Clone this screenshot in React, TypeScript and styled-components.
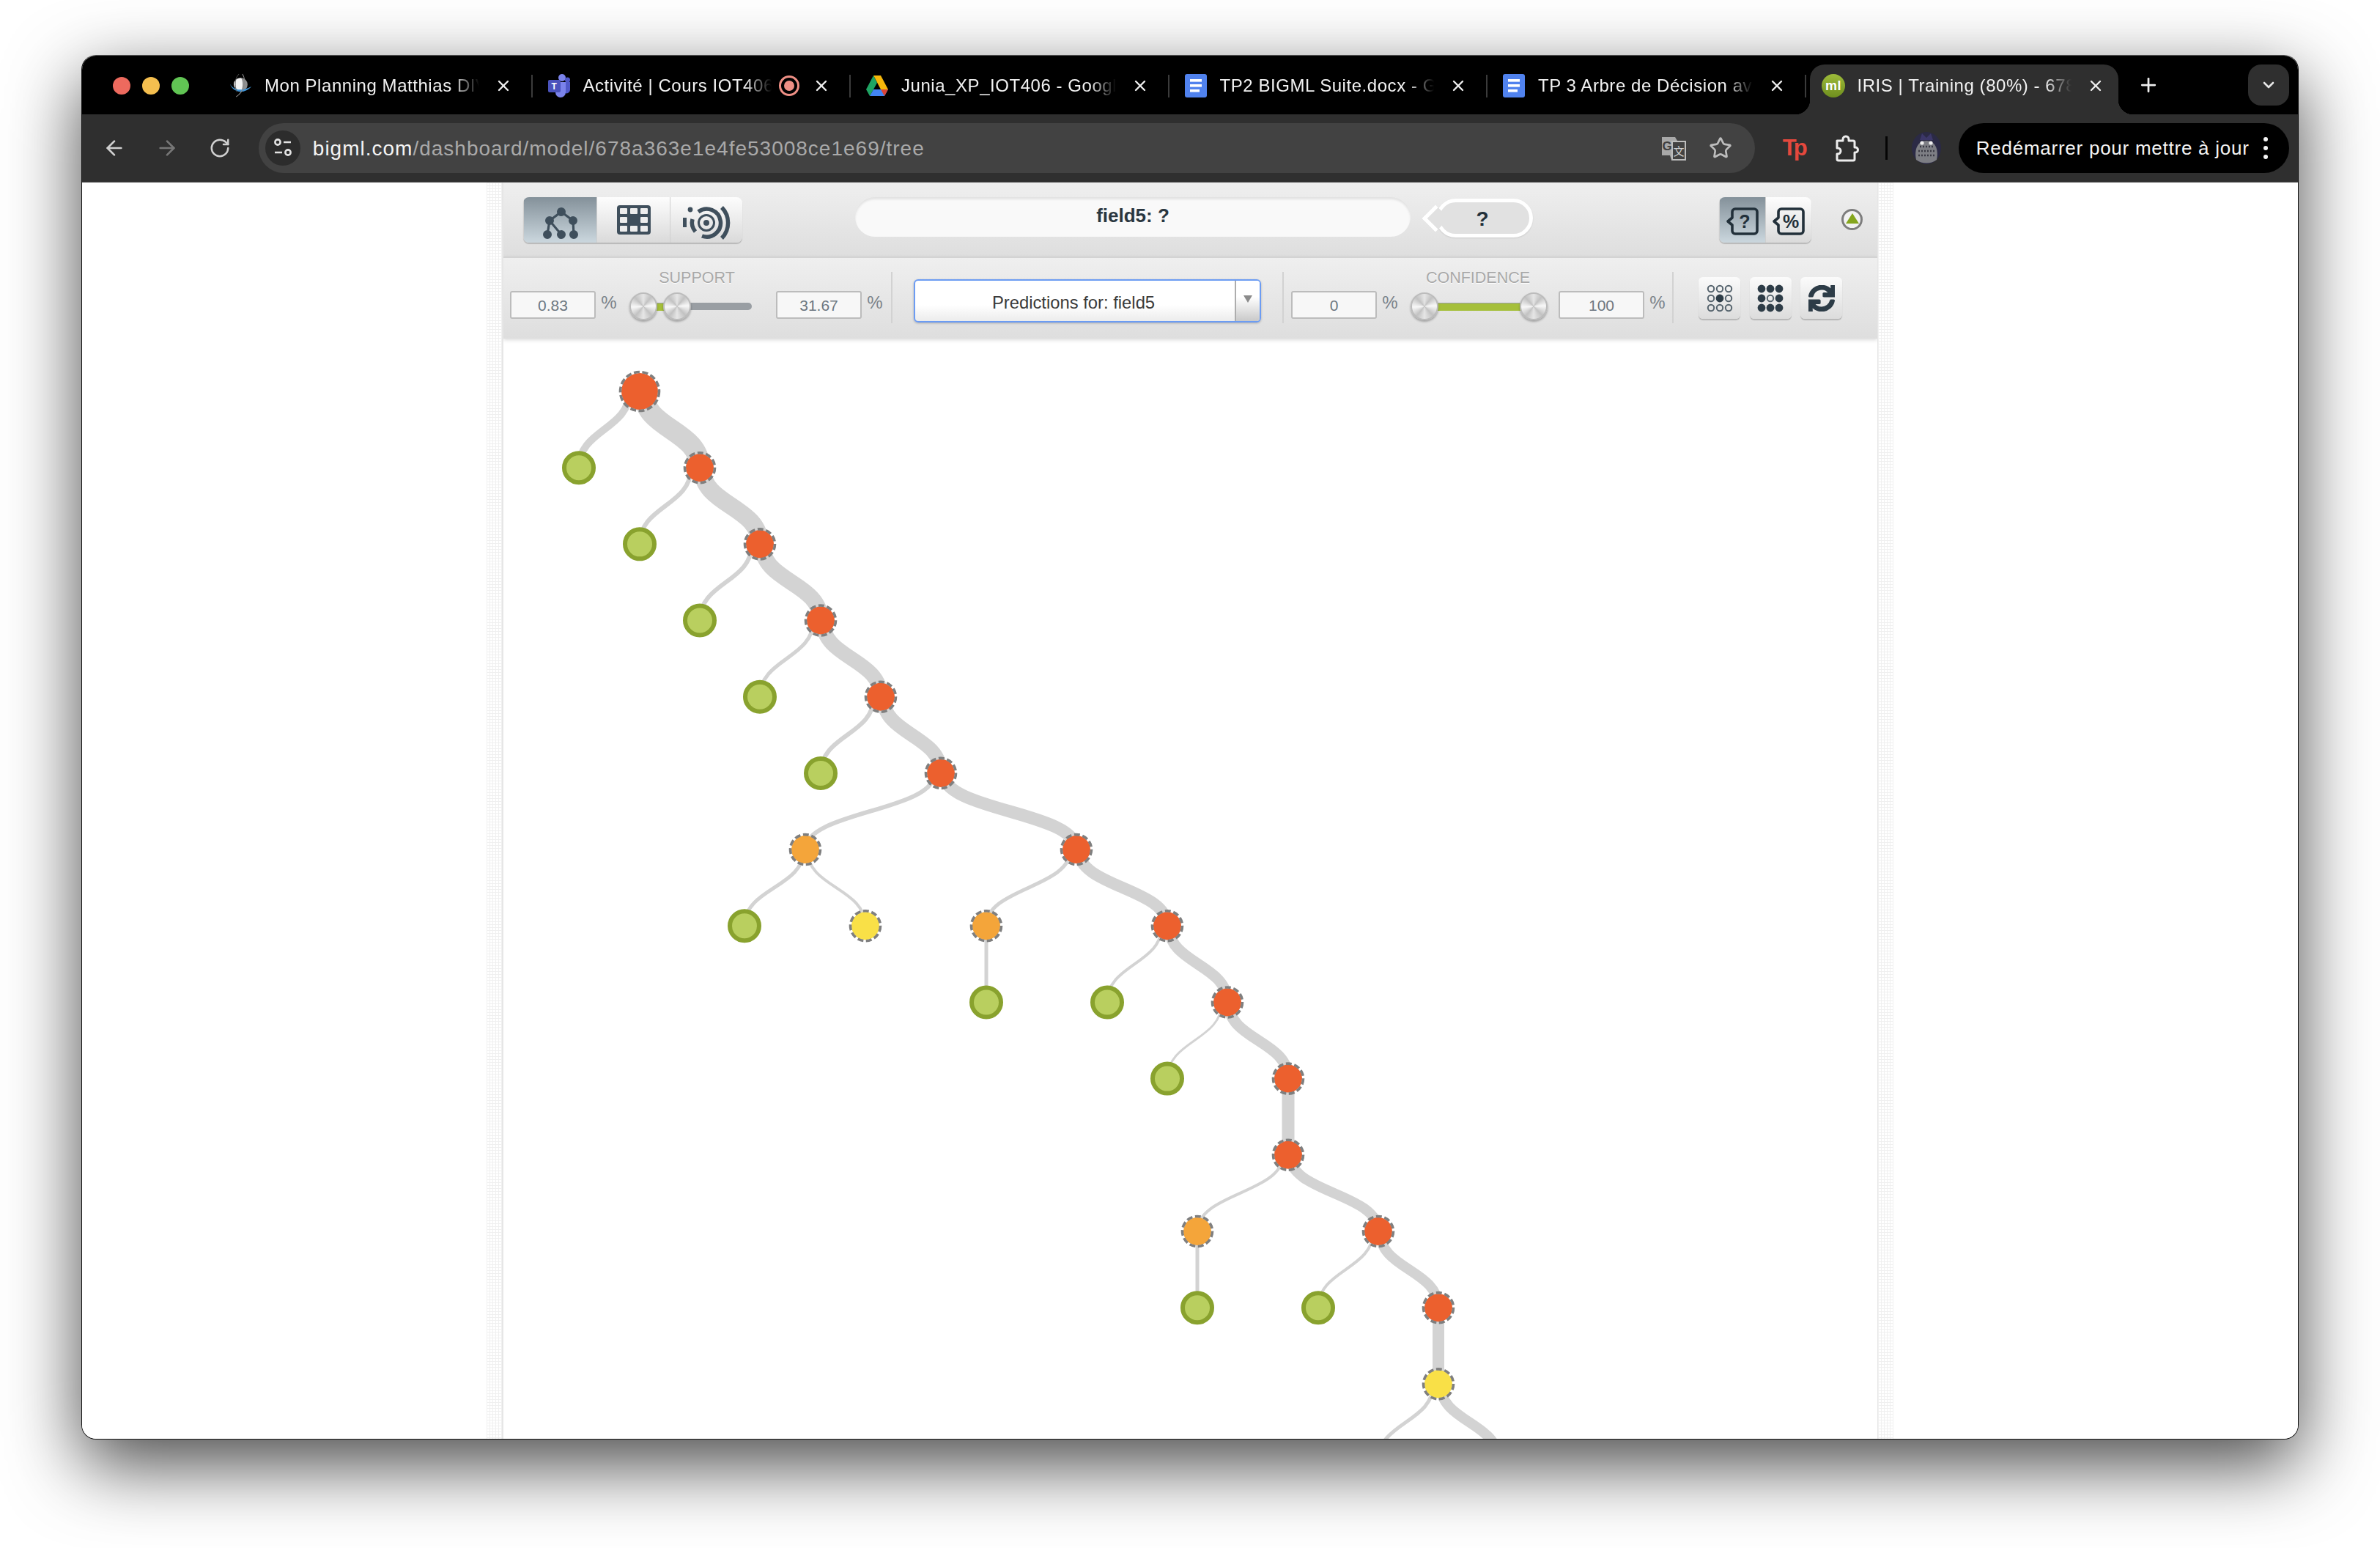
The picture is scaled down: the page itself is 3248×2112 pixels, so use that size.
import React from 'react';
import styled, { createGlobalStyle } from 'styled-components';
import { ArrowLeft, ArrowRight, ChevronDown, Plus, RotateCw, Star, X } from 'lucide-react';
import { FaSync } from 'react-icons/fa';

const GlobalStyle = createGlobalStyle`
  html, body {
    margin: 0;
    background: #fff;
    font-family: 'Liberation Sans', Arial, sans-serif;
  }
`;

const Page = styled.div`
  width: 3248px;
  height: 2112px;
  padding: 75px 0 0 111px;
  box-sizing: border-box;
  overflow: hidden;
`;

const Window = styled.div`
  width: 3026px;
  height: 1889px;
  box-sizing: border-box;
  display: flex;
  flex-direction: column;
  border: 1px solid #111;
  border-top-color: #555;
  border-radius: 20px;
  overflow: hidden;
  background: #fff;
  box-shadow: 0 34px 100px rgba(0, 0, 0, 0.72);
`;

const TitleBar = styled.div`
  height: 80px;
  flex: none;
  display: flex;
  align-items: flex-start;
  padding-top: 12px;
  box-sizing: border-box;
  background: #000;
`;

const Lights = styled.div`
  display: flex;
  gap: 16px;
  margin: 17px 34px 0 42px;
`;

const Light = styled.span<{ $color: string }>`
  width: 24px;
  height: 24px;
  border-radius: 50%;
  background: ${(p) => p.$color};
`;

const Tab = styled.div<{ $active?: boolean }>`
  position: relative;
  height: 68px;
  box-sizing: border-box;
  display: flex;
  align-items: center;
  flex: none;
  color: #f2f2f2;
  font-size: 24px;
  letter-spacing: 0.55px;
  padding-bottom: 10px;
  width: ${(p) => (p.$active ? '421px' : '432.5px')};
  margin-left: ${(p) => (p.$active ? '5px' : '0')};
  padding-left: ${(p) => (p.$active ? '16px' : '20px')};
  padding-right: ${(p) => (p.$active ? '19px' : '26px')};
  background: ${(p) => (p.$active ? '#2f2f2f' : 'transparent')};
  border-radius: 20px 20px 0 0;

  ${(p) =>
    p.$active &&
    `
    &::before, &::after {
      content: '';
      position: absolute;
      bottom: 0;
      width: 20px;
      height: 20px;
    }
    &::before {
      left: -20px;
      background: radial-gradient(circle at 0 0, transparent 20px, #2f2f2f 20.5px);
    }
    &::after {
      right: -20px;
      background: radial-gradient(circle at 100% 0, transparent 20px, #2f2f2f 20.5px);
    }
  `}
`;

const TabIcon = styled.span`
  width: 32px;
  height: 32px;
  flex: none;
  display: flex;
  align-items: center;
  justify-content: center;
  margin-right: 17px;
`;

const TabLabel = styled.span`
  flex: 1;
  min-width: 0;
  white-space: nowrap;
  overflow: hidden;
  -webkit-mask-image: linear-gradient(to right, #000 calc(100% - 36px), transparent);
  mask-image: linear-gradient(to right, #000 calc(100% - 36px), transparent);
`;

const Recording = styled.span`
  width: 28px;
  height: 28px;
  flex: none;
  box-sizing: border-box;
  margin-left: 10px;
  margin-right: -3px;
  border: 3px solid #ee8f85;
  border-radius: 50%;
  display: flex;
  align-items: center;
  justify-content: center;

  &::after {
    content: '';
    width: 14px;
    height: 14px;
    border-radius: 50%;
    background: #ee8f85;
  }
`;

const TabClose = styled.span`
  width: 24px;
  height: 24px;
  flex: none;
  margin-left: 21px;
  display: flex;
  align-items: center;
  justify-content: center;
  color: #ededed;
`;

const TabDivider = styled.span`
  width: 2px;
  height: 31px;
  flex: none;
  margin-top: 14px;
  background: #3b3b3b;
`;

const NewTab = styled.span`
  margin: 13px 0 0 26px;
  color: #eee;
  display: flex;
`;

const TabSearch = styled.span`
  width: 56px;
  height: 56px;
  margin: 0 12px 0 auto;
  border-radius: 18px;
  background: #2f2f2f;
  color: #e6e6e6;
  display: flex;
  align-items: center;
  justify-content: center;
`;

const Toolbar = styled.div`
  height: 93px;
  flex: none;
  box-sizing: border-box;
  display: flex;
  align-items: center;
  padding: 0 12px 0 26px;
  background: #2f2f2f;
  border-bottom: 1px solid #484848;
`;

const NavButton = styled.span<{ $dim?: boolean }>`
  width: 36px;
  height: 36px;
  margin-right: 36px;
  display: flex;
  align-items: center;
  justify-content: center;
  color: ${(p) => (p.$dim ? '#777' : '#d0d0d0')};
`;

const Omnibox = styled.div`
  width: 2042px;
  height: 68px;
  margin-left: -1px;
  flex: none;
  display: flex;
  align-items: center;
  border-radius: 34px;
  background: #424242;
  padding: 0 29px 0 9px;
  box-sizing: border-box;
`;

const SiteInfo = styled.span`
  width: 48px;
  height: 48px;
  flex: none;
  border-radius: 50%;
  background: #2c2c2c;
  display: flex;
  align-items: center;
  justify-content: center;
  margin-right: 17px;
`;

const Url = styled.span`
  flex: 1;
  padding-top: 1px;
  font-size: 28px;
  letter-spacing: 1px;
  color: #a9a9a9;
  white-space: nowrap;

  b {
    font-weight: 400;
    color: #f4f4f4;
  }
`;

const OmniAction = styled.span`
  width: 36px;
  height: 36px;
  margin-left: 28px;
  display: flex;
  align-items: center;
  justify-content: center;
  color: #bdbdbd;
`;

const TpMark = styled.span`
  width: 36px;
  margin-left: 35px;
  text-align: center;
  font-size: 31px;
  font-weight: 700;
  letter-spacing: -4px;
  color: #e5483d;
`;

const ExtensionButton = styled.span`
  width: 34px;
  height: 38px;
  margin-left: 37px;
  display: flex;
`;

const ToolbarSeparator = styled.span`
  width: 3px;
  height: 32px;
  margin-left: 36px;
  background: #050505;
`;

const Avatar = styled.span`
  width: 40px;
  height: 44px;
  margin: 0 24px 0 33px;
  display: flex;
`;

const UpdatePill = styled.div`
  width: 452px;
  height: 68px;
  box-sizing: border-box;
  display: flex;
  align-items: center;
  padding: 0 29px 0 24px;
  border-radius: 34px;
  background: #000;
  color: #f4f4f4;
  font-size: 26px;
  letter-spacing: 0.75px;
  white-space: nowrap;
`;

const MenuDots = styled.span`
  margin-left: auto;
  display: flex;
  flex-direction: column;
  gap: 6px;

  i {
    width: 6px;
    height: 6px;
    border-radius: 50%;
    background: #f4f4f4;
  }
`;

const Content = styled.div`
  flex: 1;
  min-height: 0;
  display: flex;
  justify-content: center;
  background: #fff;
`;

const Gutter = styled.div`
  width: 21px;
  flex: none;
  background-color: #fff;
  background-image: linear-gradient(#f0f0f0 1px, transparent 1px), linear-gradient(90deg, #f0f0f0 1px, transparent 1px);
  background-size: 4px 4px;
`;

const Panel = styled.div`
  width: 1878px;
  flex: none;
  box-sizing: border-box;
  display: flex;
  flex-direction: column;
  border-left: 2px solid #e6e6e6;
  border-right: 1px solid #e6e6e6;
  overflow: hidden;
`;

const TopBar = styled.div`
  height: 101px;
  flex: none;
  box-sizing: border-box;
  display: flex;
  align-items: flex-start;
  padding: 20px 0 0 27px;
  background: linear-gradient(#efefef, #dedede);
`;

const FilterBar = styled.div`
  height: 112px;
  flex: none;
  box-sizing: border-box;
  display: flex;
  align-items: flex-start;
  padding: 13px 0 0 9px;
  border-top: 2px solid #d3d3d3;
  background: linear-gradient(#efefef, #dedede);
  box-shadow: 0 2px 5px rgba(0, 0, 0, 0.14);
  position: relative;
`;

const ButtonGroup = styled.div<{ $left?: number }>`
  display: flex;
  margin-left: ${(p) => p.$left ?? 0}px;
  border-radius: 8px;
  box-shadow: 0 2px 1px #b9b9b9;
  overflow: hidden;
`;

const ViewButton = styled.div<{ $active?: boolean; $width: number; $drop?: number }>`
  width: ${(p) => p.$width}px;
  height: 62px;
  box-sizing: border-box;
  display: flex;
  align-items: center;
  justify-content: center;
  padding-top: ${(p) => p.$drop ?? 0}px;
  border-left: 1px solid #cfcfcf;
  background: ${(p) => (p.$active ? 'linear-gradient(#84919a, #cbd7de)' : 'linear-gradient(#fdfdfd, #dadada)')};
`;

const TitlePill = styled.div`
  width: 758px;
  height: 54px;
  margin-left: 154px;
  flex: none;
  box-sizing: border-box;
  display: flex;
  align-items: center;
  justify-content: center;
  padding-bottom: 4px;
  border-radius: 27px;
  background: #f9f9f9;
  box-shadow: inset 0 3px 3px rgba(0, 0, 0, 0.09);
  color: #2a3640;
  font-size: 26px;
  font-weight: 700;
`;

const Bubble = styled.div`
  position: relative;
  width: 132px;
  height: 53px;
  margin: 2px 0 0 35px;
  box-sizing: border-box;
  display: flex;
  align-items: center;
  justify-content: center;
  padding: 3px 6px 0 0;
  border: 5px solid #fff;
  border-radius: 27px;
  background: #e1e1e1;
  color: #22303a;
  font-size: 28px;
  font-weight: 700;
  box-shadow: 0 1px 2px rgba(0, 0, 0, 0.1);

  &::before {
    content: '';
    position: absolute;
    left: -19px;
    top: 50%;
    width: 26px;
    height: 26px;
    margin-top: -13px;
    box-sizing: border-box;
    transform: rotate(45deg);
    border-left: 5px solid #fff;
    border-bottom: 5px solid #fff;
    background: #e1e1e1;
  }
`;

const Collapse = styled.span`
  width: 29px;
  height: 29px;
  margin: 16px 0 0 41px;
  box-sizing: border-box;
  display: flex;
  align-items: center;
  justify-content: center;
  border: 3px solid #7d7d7d;
  border-radius: 50%;
  background: #f2f2f2;

  &::after {
    content: '';
    margin-top: -3px;
    border: 9px solid transparent;
    border-top: 0;
    border-bottom: 14px solid #85a61e;
  }
`;

const RangeGroup = styled.div`
  width: 510px;
  flex: none;
  display: flex;
  flex-direction: column;
`;

const RangeLabel = styled.div`
  height: 26px;
  line-height: 26px;
  padding-top: 1px;
  margin-bottom: 5px;
  text-align: center;
  font-size: 21.5px;
  color: #a9a9a9;
  text-shadow: 0 1px 0 #fff;
`;

const RangeRow = styled.div`
  display: flex;
  align-items: flex-start;
`;

const ValueBox = styled.div`
  width: 117px;
  height: 38px;
  flex: none;
  box-sizing: border-box;
  display: flex;
  align-items: center;
  justify-content: center;
  padding-top: 2px;
  border: 2px solid #bcbcbc;
  border-radius: 3px;
  background: #f7f7f7;
  color: #6d7781;
  font-size: 21px;
`;

const Percent = styled.span`
  width: 36px;
  flex: none;
  text-align: center;
  color: #7b838a;
  font-size: 24px;
  line-height: 32px;
`;

const Slider = styled.div<{ $width: number }>`
  position: relative;
  width: ${(p) => p.$width}px;
  height: 39px;
  flex: none;
  margin: 2px 15px 0 10px;
`;

const SliderTrack = styled.div<{ $left: number; $width: number; $fill?: boolean }>`
  position: absolute;
  left: ${(p) => p.$left}px;
  width: ${(p) => p.$width}px;
  top: ${(p) => (p.$fill ? 15 : 14)}px;
  height: 10px;
  border-radius: ${(p) => (p.$fill ? 0 : '5px')};
  background: ${(p) => (p.$fill ? '#a5bf3a' : '#999ea3')};
`;

const Knob = styled.div<{ $left: number }>`
  position: absolute;
  left: ${(p) => p.$left}px;
  top: 0;
  width: 38px;
  height: 38px;
  box-sizing: border-box;
  border: 2px solid #bcbcbc;
  border-radius: 50%;
  background: conic-gradient(#e6e6e6, #c2c2c2 11%, #f8f8f8 24%, #c2c2c2 38%, #e6e6e6 50%, #c2c2c2 61%, #f8f8f8 74%, #c2c2c2 88%, #e6e6e6);
  box-shadow: 0 2px 3px rgba(0, 0, 0, 0.3);
`;

const BarDivider = styled.span<{ $left: number; $right: number }>`
  width: 2px;
  height: 70px;
  flex: none;
  margin: 6px ${(p) => p.$right}px 0 ${(p) => p.$left}px;
  background: #d2d2d2;
`;

const Select = styled.div`
  width: 474px;
  height: 59px;
  flex: none;
  margin-top: 16px;
  box-sizing: border-box;
  display: flex;
  border: 2px solid #6c9cf3;
  border-radius: 6px;
  overflow: hidden;
  background: linear-gradient(#fff 60%, #ececec);
  box-shadow: 0 1px 3px rgba(0, 0, 0, 0.25);
`;

const SelectValue = styled.span`
  flex: 1;
  display: flex;
  align-items: center;
  justify-content: center;
  padding: 5px 4px 0 0;
  color: #3a3a3a;
  font-size: 23.8px;
`;

const SelectArrow = styled.span`
  width: 34px;
  flex: none;
  display: flex;
  justify-content: center;
  padding-top: 20px;
  box-sizing: border-box;
  border-left: 2px solid #adadad;
  background: linear-gradient(#fff 40%, #c9c9c9);

  &::after {
    content: '';
    height: 0;
    border: 6px solid transparent;
    border-bottom: 0;
    border-top: 10px solid #8b8b8b;
  }
`;

const ToolButtons = styled.div`
  display: flex;
  gap: 12.5px;
  margin-top: 13px;
`;

const ToolButton = styled.div`
  width: 57px;
  height: 57px;
  display: flex;
  align-items: center;
  justify-content: center;
  border-radius: 6px;
  background: linear-gradient(#fbfbfb, #dcdcdc);
  box-shadow: 0 2px 1px #b7b7b7;
  color: #2d3c47;
`;

const TreeCanvas = styled.div`
  flex: 1;
  min-height: 0;
  overflow: hidden;
  background: #fff;

  svg {
    display: block;
  }
`;

type Kind = 'split' | 'warn' | 'mid' | 'leaf';
type TreeNode = { id: string; x: number; y: number; kind: Kind; r?: number };

const row = (i: number) => 534 + i * 104.18;

const nodes: TreeNode[] = [
  { id: 'a', x: 873, y: row(0), kind: 'split', r: 25 },
  { id: 'a1', x: 790, y: row(1), kind: 'leaf' },
  { id: 'b', x: 955, y: row(1), kind: 'split' },
  { id: 'b1', x: 873, y: row(2), kind: 'leaf' },
  { id: 'c', x: 1037, y: row(2), kind: 'split' },
  { id: 'c1', x: 955, y: row(3), kind: 'leaf' },
  { id: 'd', x: 1120, y: row(3), kind: 'split' },
  { id: 'd1', x: 1037, y: row(4), kind: 'leaf' },
  { id: 'e', x: 1202, y: row(4), kind: 'split' },
  { id: 'e1', x: 1120, y: row(5), kind: 'leaf' },
  { id: 'f', x: 1284, y: row(5), kind: 'split' },
  { id: 'g', x: 1099, y: row(6), kind: 'warn' },
  { id: 'h', x: 1469, y: row(6), kind: 'split' },
  { id: 'g1', x: 1016, y: row(7), kind: 'leaf' },
  { id: 'g2', x: 1181, y: row(7), kind: 'mid' },
  { id: 'h1', x: 1346, y: row(7), kind: 'warn' },
  { id: 'i', x: 1593, y: row(7), kind: 'split' },
  { id: 'h2', x: 1346, y: row(8), kind: 'leaf' },
  { id: 'i1', x: 1511, y: row(8), kind: 'leaf' },
  { id: 'j', x: 1675, y: row(8), kind: 'split' },
  { id: 'j1', x: 1593, y: row(9), kind: 'leaf' },
  { id: 'k', x: 1758, y: row(9), kind: 'split' },
  { id: 'l', x: 1758, y: row(10), kind: 'split' },
  { id: 'l1', x: 1634, y: row(11), kind: 'warn' },
  { id: 'm', x: 1881, y: row(11), kind: 'split' },
  { id: 'l2', x: 1634, y: row(12), kind: 'leaf' },
  { id: 'm1', x: 1799, y: row(12), kind: 'leaf' },
  { id: 'n', x: 1963, y: row(12), kind: 'split' },
  { id: 'o', x: 1963, y: row(13), kind: 'mid' },
];

// parent -> [child, edge width], left child first
const links: Record<string, [{ x: number; y: number } | string, number][]> = {
  a: [['a1', 10], ['b', 28]],
  b: [['b1', 6], ['c', 24]],
  c: [['c1', 6], ['d', 22]],
  d: [['d1', 5], ['e', 20]],
  e: [['e1', 6], ['f', 19]],
  f: [['g', 6], ['h', 17]],
  g: [['g1', 5], ['g2', 4]],
  h: [['h1', 5], ['i', 16]],
  h1: [['h2', 5]],
  i: [['i1', 4], ['j', 15]],
  j: [['j1', 3], ['k', 15]],
  k: [['l', 17]],
  l: [['l1', 4], ['m', 14]],
  l1: [['l2', 5]],
  m: [['m1', 4], ['n', 14]],
  n: [['o', 16]],
  o: [[{ x: 1881, y: row(14) }, 5], [{ x: 2045, y: row(14) }, 14]],
};

const byId = Object.fromEntries(nodes.map((n) => [n.id, n]));

const nodeFill: Record<Kind, string> = {
  split: '#ec602e',
  warn: '#f4a53a',
  mid: '#f9e047',
  leaf: '#b9cf5f',
};

const edgePath = (x1: number, y1: number, x2: number, y2: number) => {
  const my = (y1 + y2) / 2;
  return `M${x1} ${y1}C${x1} ${my} ${x2} ${my} ${x2} ${y2}`;
};

const TreeDiagram = () => {
  const edges: { d: string; w: number }[] = [];
  Object.entries(links).forEach(([parentId, kids]) => {
    const parent = byId[parentId];
    const total = kids.reduce((sum, k) => sum + k[1], 0);
    let offset = -total / 2;
    kids.forEach(([target, w]) => {
      const child = typeof target === 'string' ? byId[target] : target;
      const startX = kids.length > 1 ? parent.x + offset + w / 2 : parent.x;
      edges.push({ d: edgePath(startX, parent.y, child.x, child.y), w });
      offset += w;
    });
  });

  return (
    <svg width="1875" height="1510" viewBox="687 462 1875 1510">
      {edges.map((e, i) => (
        <path key={i} d={e.d} fill="none" stroke="#d3d3d3" strokeWidth={e.w} />
      ))}
      {nodes.map((n) =>
        n.kind === 'leaf' ? (
          <circle key={n.id} cx={n.x} cy={n.y} r={20} fill={nodeFill.leaf} stroke="#89a22e" strokeWidth={6} />
        ) : (
          <g key={n.id}>
            <circle cx={n.x} cy={n.y} r={n.r ?? 19} fill={nodeFill[n.kind]} />
            <circle
              cx={n.x}
              cy={n.y}
              r={(n.r ?? 19) + 1.5}
              fill="none"
              stroke="#7f7f7f"
              strokeWidth={3.6}
              strokeDasharray="8 3.6"
            />
          </g>
        ),
      )}
    </svg>
  );
};

const TreeIcon = () => (
  <svg width="48" height="43" viewBox="0 0 48 43" fill="#3f4f5c" stroke="#3f4f5c" strokeWidth="3.2">
    <path d="M25 6L9 18M25 6l16 12M9 18L6 37M9 18l16 19M41 18l1 19" fill="none" />
    <circle cx="25" cy="6" r="4.4" />
    <circle cx="9" cy="18" r="4.4" />
    <circle cx="41" cy="18" r="4.4" />
    <circle cx="6" cy="37" r="4.4" />
    <circle cx="25" cy="37" r="4.4" />
    <circle cx="42" cy="37" r="4.4" />
  </svg>
);

const TableIcon = () => (
  <svg width="46" height="40" viewBox="0 0 46 40">
    <rect width="46" height="40" rx="4" fill="#3f4f5c" />
    {[4, 18, 32].map((x) =>
      [4, 16, 28].map((y) =>
        x === 18 && y === 16 ? null : <rect key={`${x}-${y}`} x={x} y={y} width="10" height="8" rx="1" fill="#ededed" />,
      ),
    )}
  </svg>
);

const RadarIcon = () => (
  <svg width="66" height="48" viewBox="-33 -24 66 48" fill="none" stroke="#3f4f5c">
    <circle r="4" fill="#3f4f5c" stroke="none" />
    <circle r="10.5" strokeWidth="3" />
    <path d="M-11-15A19 19 0 1 1-6 18" strokeWidth="5.5" />
    <path d="M-19-5A19 19 0 0 0-15 12" strokeWidth="5.5" />
    <path d="M21-21A30 30 0 0 1 21 21" strokeWidth="5.5" />
    <rect x="-32" y="-7" width="5" height="13" fill="#3f4f5c" stroke="none" />
    <circle cx="-22" cy="-18" r="3.4" fill="#3f4f5c" stroke="none" />
  </svg>
);

const BraceIcon = ({ glyph }: { glyph: string }) => (
  <svg width="46" height="40" viewBox="0 0 46 40">
    <path
      d="M9 7a4 4 0 0 1 4-4h26a4 4 0 0 1 4 4v26a4 4 0 0 1-4 4H13a4 4 0 0 1-4-4v-8l-6-5 6-5z"
      fill="none"
      stroke="#22303a"
      strokeWidth="3.6"
      strokeLinejoin="round"
    />
    <text x="26" y="29" textAnchor="middle" fontSize="25" fontWeight="700" fill="#22303a" fontFamily="'Liberation Sans', sans-serif">
      {glyph}
    </text>
  </svg>
);

const DotsIcon = ({ inverted }: { inverted?: boolean }) => (
  <svg width="38" height="40" viewBox="0 0 38 40">
    {[7, 19, 31].map((x) =>
      [7, 20, 33].map((y) => {
        const isCenter = x === 19 && y === 20;
        const solid = inverted ? !isCenter : isCenter;
        return (
          <circle
            key={`${x}-${y}`}
            cx={x}
            cy={y}
            r={solid ? 5.4 : 4.2}
            fill={solid ? '#2d3c47' : 'none'}
            stroke={solid ? 'none' : '#55636d'}
            strokeWidth="2"
          />
        );
      }),
    )}
  </svg>
);

const PlanningFavicon = () => (
  <svg width="34" height="36" viewBox="0 0 34 36">
    <circle cx="17" cy="16" r="9.5" fill="#f2f2f2" />
    <path d="M18 6.6a9.5 9.5 0 0 1 0 19c3-4 3-15 0-19z" fill="#8f8f8f" />
    <path d="M1 13c3 10 16 15 32 6-9 11-27 11-32-6z" fill="#3d93d6" />
    <path d="M20 1c6 9 3 25-9 33" fill="none" stroke="#8a8a8a" strokeWidth="1.2" />
    <path d="M15 1C9 7 8 17 12 27" fill="none" stroke="#555" strokeWidth="1" />
  </svg>
);

const TeamsFavicon = () => (
  <svg width="32" height="34" viewBox="0 0 32 34">
    <circle cx="20" cy="6" r="5" fill="#7b83eb" />
    <circle cx="27.5" cy="9" r="3.5" fill="#5059c9" />
    <path d="M21 12h10v11a5 5 0 0 1-7 4z" fill="#5059c9" />
    <path d="M9 12h16v14a7 7 0 0 1-14 0z" fill="#7b83eb" />
    <rect x="1" y="9" width="17" height="17" rx="2" fill="#4b53bc" />
    <text x="9.5" y="22" textAnchor="middle" fontSize="12" fontWeight="700" fill="#fff" fontFamily="'Liberation Sans', sans-serif">
      T
    </text>
  </svg>
);

const DriveFavicon = () => (
  <svg width="32" height="32" viewBox="0 0 32 32">
    <path d="M11 2h10l10 19H21z" fill="#f6b70a" />
    <path d="M11 2L1 21l5 9 10-18z" fill="#1fa463" />
    <path d="M6 30h20l5-9H11z" fill="#4285f4" />
    <path d="M26 30l5-9H21z" fill="#db4437" />
  </svg>
);

const DocsFavicon = () => (
  <svg width="30" height="32" viewBox="0 0 30 32">
    <rect width="30" height="32" rx="3" fill="#5082ee" />
    <rect x="7" y="7" width="16" height="3.6" fill="#fff" />
    <rect x="7" y="14" width="16" height="3.6" fill="#fff" />
    <rect x="7" y="21" width="13" height="3.6" fill="#fff" />
  </svg>
);

const MlFavicon = () => (
  <svg width="32" height="32" viewBox="0 0 32 32">
    <defs>
      <linearGradient id="mlGreen" x1="0" y1="0" x2="0" y2="1">
        <stop offset="0" stopColor="#9dbb3a" />
        <stop offset="1" stopColor="#6f8f1e" />
      </linearGradient>
    </defs>
    <circle cx="16" cy="16" r="16" fill="url(#mlGreen)" />
    <text x="16" y="22" textAnchor="middle" fontSize="18" fontWeight="700" fill="#fff" fontFamily="'Liberation Sans', sans-serif">
      ml
    </text>
  </svg>
);

const SiteInfoIcon = () => (
  <svg width="26" height="32" viewBox="0 0 26 32" fill="none" stroke="#e3e3e3" strokeWidth="2.6">
    <circle cx="6" cy="8" r="3.6" />
    <path d="M14 8h10M2 22h10" />
    <circle cx="20" cy="22" r="3.6" />
  </svg>
);

const TranslateIcon = () => (
  <svg width="36" height="36" viewBox="0 0 36 36">
    <path d="M2 3h18l3 5h11v26H15l-2-6H2z" fill="#a8a8a8" />
    <rect x="16" y="9" width="18" height="25" fill="#424242" stroke="#bdbdbd" strokeWidth="2" />
    <text x="9" y="21" textAnchor="middle" fontSize="17" fontWeight="700" fill="#3f3f3f" fontFamily="'Liberation Sans', sans-serif">
      G
    </text>
    <text x="25" y="28" textAnchor="middle" fontSize="15" fill="#d0d0d0" fontFamily="'Noto Sans CJK SC', sans-serif">
      文
    </text>
  </svg>
);

const PuzzleIcon = () => (
  <svg width="34" height="38" viewBox="0 0 34 38">
    <path
      d="M4 9h8V7a4 4 0 0 1 8 0v2h6a2 2 0 0 1 2 2v7h1a3.5 3.5 0 0 1 0 7h-1v9a2 2 0 0 1-2 2H6a2 2 0 0 1-2-2v-7h1a4 4 0 0 0 0-8H4z"
      fill="none"
      stroke="#ececec"
      strokeWidth="3"
      strokeLinejoin="round"
    />
  </svg>
);

const AvatarPicture = () => (
  <svg width="40" height="44" viewBox="0 0 40 44">
    <ellipse cx="20" cy="22" rx="20" ry="22" fill="#2b2a45" />
    <path d="M6 38C3 24 8 12 20 12s17 12 14 26c-8 6-20 6-28 0z" fill="#7d7e84" />
    <path d="M11 11l3-9 6 6 6-6 3 9z" fill="#3c3768" />
    <path d="M11 20h18M9 26h22M9 32h22" stroke="#3a3a44" strokeWidth="2.4" strokeDasharray="2 2" />
    <circle cx="14" cy="15" r="2.6" fill="#eee" />
    <circle cx="26" cy="15" r="2.6" fill="#eee" />
  </svg>
);

type TabInfo = { title: string; icon: React.ReactNode; recording?: boolean };

const tabs: TabInfo[] = [
  { title: 'Mon Planning Matthias DIV', icon: <PlanningFavicon /> },
  { title: 'Activité | Cours IOT406', icon: <TeamsFavicon />, recording: true },
  { title: 'Junia_XP_IOT406 - Googl', icon: <DriveFavicon /> },
  { title: 'TP2 BIGML Suite.docx - G', icon: <DocsFavicon /> },
  { title: 'TP 3 Arbre de Décision av', icon: <DocsFavicon /> },
];

export default function App() {
  return (
    <>
      <GlobalStyle />
      <Page>
        <Window>
          <TitleBar>
            <Lights>
              <Light $color="#ed6a5e" />
              <Light $color="#f5bf4f" />
              <Light $color="#61c554" />
            </Lights>
            {tabs.map((tab) => (
              <React.Fragment key={tab.title}>
                <Tab>
                  <TabIcon>{tab.icon}</TabIcon>
                  <TabLabel>{tab.title}</TabLabel>
                  {tab.recording && <Recording />}
                  <TabClose>
                    <X size={24} strokeWidth={2.4} />
                  </TabClose>
                </Tab>
                <TabDivider />
              </React.Fragment>
            ))}
            <Tab $active>
              <TabIcon>
                <MlFavicon />
              </TabIcon>
              <TabLabel>IRIS | Training (80%) - 678</TabLabel>
              <TabClose>
                <X size={24} strokeWidth={2.4} />
              </TabClose>
            </Tab>
            <NewTab>
              <Plus size={30} strokeWidth={2.2} />
            </NewTab>
            <TabSearch>
              <ChevronDown size={24} strokeWidth={2.6} />
            </TabSearch>
          </TitleBar>

          <Toolbar>
            <NavButton>
              <ArrowLeft size={32} strokeWidth={2} />
            </NavButton>
            <NavButton $dim>
              <ArrowRight size={32} strokeWidth={2} />
            </NavButton>
            <NavButton>
              <RotateCw size={30} strokeWidth={2} />
            </NavButton>
            <Omnibox>
              <SiteInfo>
                <SiteInfoIcon />
              </SiteInfo>
              <Url>
                <b>bigml.com</b>/dashboard/model/678a363e1e4fe53008ce1e69/tree
              </Url>
              <OmniAction>
                <TranslateIcon />
              </OmniAction>
              <OmniAction>
                <Star size={32} strokeWidth={2} />
              </OmniAction>
            </Omnibox>
            <TpMark>Tp</TpMark>
            <ExtensionButton>
              <PuzzleIcon />
            </ExtensionButton>
            <ToolbarSeparator />
            <Avatar>
              <AvatarPicture />
            </Avatar>
            <UpdatePill>
              Redémarrer pour mettre à jour
              <MenuDots>
                <i />
                <i />
                <i />
              </MenuDots>
            </UpdatePill>
          </Toolbar>

          <Content>
            <Gutter />
            <Panel>
              <TopBar>
                <ButtonGroup>
                  <ViewButton $active $width={100} $drop={8}>
                    <TreeIcon />
                  </ViewButton>
                  <ViewButton $width={100}>
                    <TableIcon />
                  </ViewButton>
                  <ViewButton $width={99} $drop={8}>
                    <RadarIcon />
                  </ViewButton>
                </ButtonGroup>
                <TitlePill>field5: ?</TitlePill>
                <Bubble>?</Bubble>
                <ButtonGroup $left={254}>
                  <ViewButton $active $width={63} $drop={4}>
                    <BraceIcon glyph="?" />
                  </ViewButton>
                  <ViewButton $width={63} $drop={4}>
                    <BraceIcon glyph="%" />
                  </ViewButton>
                </ButtonGroup>
                <Collapse />
              </TopBar>

              <FilterBar>
                <RangeGroup>
                  <RangeLabel>SUPPORT</RangeLabel>
                  <RangeRow>
                    <ValueBox>0.83</ValueBox>
                    <Percent>%</Percent>
                    <Slider $width={185}>
                      <SliderTrack $left={19} $width={148} />
                      <SliderTrack $fill $left={19} $width={46} />
                      <Knob $left={0} />
                      <Knob $left={46} />
                    </Slider>
                    <ValueBox>31.67</ValueBox>
                    <Percent>%</Percent>
                  </RangeRow>
                </RangeGroup>
                <BarDivider $left={10} $right={29} />
                <Select>
                  <SelectValue>Predictions for: field5</SelectValue>
                  <SelectArrow />
                </Select>
                <BarDivider $left={29} $right={10} />
                <RangeGroup>
                  <RangeLabel>CONFIDENCE</RangeLabel>
                  <RangeRow>
                    <ValueBox>0</ValueBox>
                    <Percent>%</Percent>
                    <Slider $width={187}>
                      <SliderTrack $left={19} $width={149} />
                      <SliderTrack $fill $left={19} $width={149} />
                      <Knob $left={0} />
                      <Knob $left={149} />
                    </Slider>
                    <ValueBox>100</ValueBox>
                    <Percent>%</Percent>
                  </RangeRow>
                </RangeGroup>
                <BarDivider $left={10} $right={34} />
                <ToolButtons>
                  <ToolButton>
                    <DotsIcon />
                  </ToolButton>
                  <ToolButton>
                    <DotsIcon inverted />
                  </ToolButton>
                  <ToolButton>
                    <FaSync size={36} stroke="currentColor" strokeWidth={24} />
                  </ToolButton>
                </ToolButtons>
              </FilterBar>

              <TreeCanvas>
                <TreeDiagram />
              </TreeCanvas>
            </Panel>
            <Gutter />
          </Content>
        </Window>
      </Page>
    </>
  );
}
